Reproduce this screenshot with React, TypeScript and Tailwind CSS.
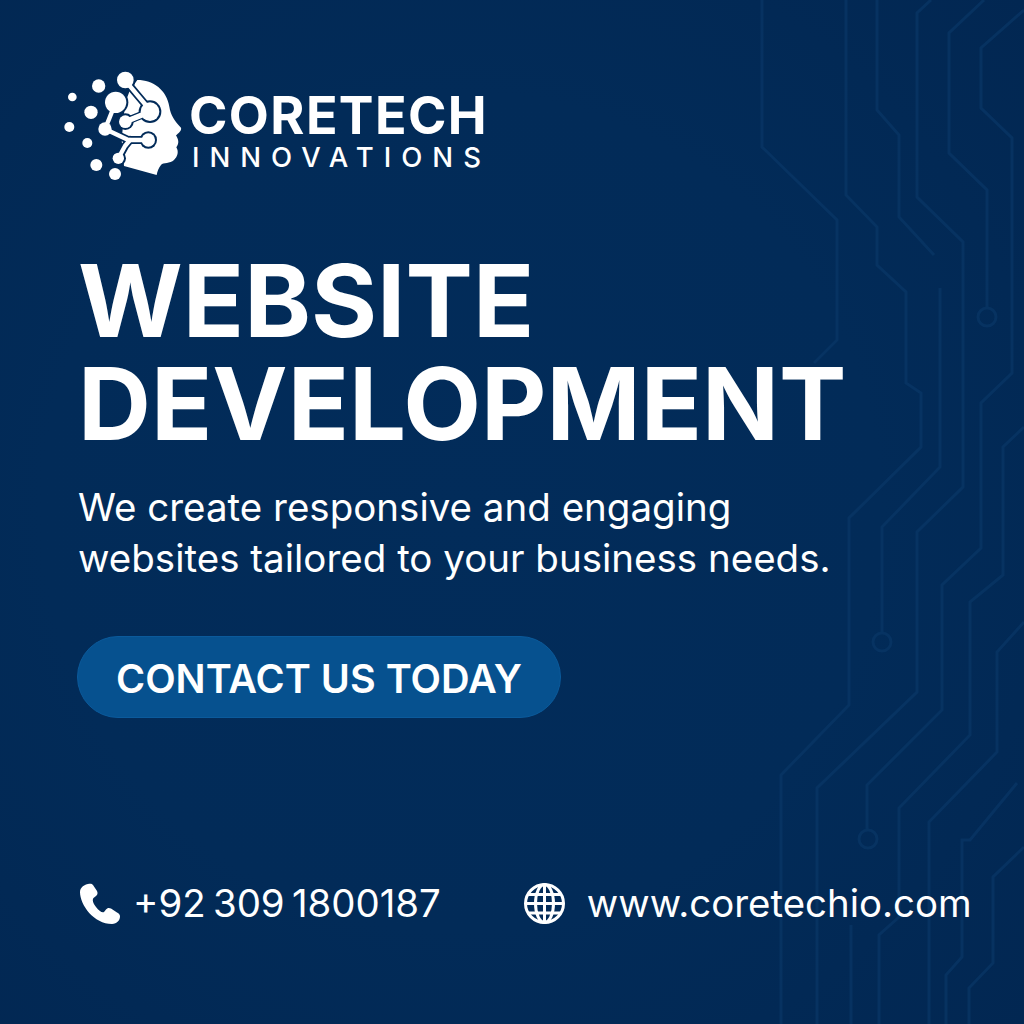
import React from "react";

const traces = [
  "M762 0V147L837 220V340L814 363",
  "M846 0V195L877 227V265L906 292V383L921 393V447L849 518V705L781 775V1024",
  "M877 0V110L899 135V217L934 255",
  "M931 0L917 13V197L963 242V487L917 532V692L817 788V1024",
  "M940 288V467L882 527V633",
  "M984 0L949 33V153L987 190V308",
  "M1024 10L981 48V108L1012 138V373L981 403V548L942 585V710L867 785V830",
  "M1024 427L1003 447V575L970 602V735L899 808V917L879 935V1024",
  "M1024 622L997 652V752L929 822V1024",
  "M1017 783L970 840H962V957L946 975V1024",
  "M1024 847L993 877V963L969 988V1024",
  "M851 925V1024",
];

function CircuitBackground() {
  return (
    <svg className="absolute inset-0 h-full w-full" viewBox="0 0 1024 1024" fill="none">
      <g stroke="#0a3868" strokeWidth="3" opacity="0.65">
        {traces.map((d) => (
          <path key={d} d={d} />
        ))}
        <circle cx="987" cy="317" r="9" />
        <circle cx="882" cy="642" r="9" />
        <circle cx="868" cy="839" r="9" />
      </g>
    </svg>
  );
}

// node links inside the head: each one gets a dark casing under a white core
const links = [
  "M226 62L262 105L300 150",
  "M197 127L178 175L165 207",
  "M226 185L300 155",
  "M165 207L235 240H295",
  "M205 295L225 258L240 240",
];
const nodes: [number, number, number][] = [
  [226, 60, 25],
  [197, 127, 32],
  [300, 155, 28],
  [226, 185, 19],
  [165, 207, 20],
  [295, 240, 20],
  [205, 295, 17],
];
const dots: [number, number, number][] = [
  [146, 78, 20],
  [67, 111, 13],
  [123, 157, 20],
  [58, 201, 15],
  [112, 249, 15],
  [139, 315, 18],
  [195, 342, 18],
];

function Logo() {
  return (
    <svg className="h-[130px] w-[150px] shrink-0" viewBox="0 0 450 390" fill="none">
      <path
        fill="#fff"
        d="M262 60C310 60 350 90 358 140C362 165 372 180 393 203C396 212 384 220 378 226C386 240 388 250 379 262C387 275 383 290 372 300C360 312 340 306 333 315C325 325 322 335 320 345L222 318L215 240L225 130L240 90Z"
      />
      <g strokeLinecap="round" strokeLinejoin="round">
        {links.map((d) => (
          <path key={d} d={d} stroke="#022b59" strokeWidth="24" />
        ))}
        {nodes.map(([cx, cy, r]) => (
          <circle key={cx + "-" + cy} cx={cx} cy={cy} r={r + 6} fill="#022b59" />
        ))}
        {links.map((d) => (
          <path key={d} d={d} stroke="#fff" strokeWidth="13" />
        ))}
        <path d="M226 185L300 155" stroke="#fff" strokeWidth="16" />
      </g>
      {nodes.concat(dots).map(([cx, cy, r]) => (
        <circle key={cx + "_" + cy} cx={cx} cy={cy} r={r} fill="#fff" />
      ))}
    </svg>
  );
}

function PhoneIcon() {
  return (
    <svg className="h-[41px] w-[40px] shrink-0" viewBox="0 0 40 41" fill="#fff">
      <path d="M8 1C5 1.5 0 4 0 9C0 22 14 41 32 41C37 41 40 37 40 33.5C40 31.5 39 30.5 37 29.500L31 25.500C29 24.500 27 25 26 26.500L24 29C22 30 19 28 16 24C13 20 12 17 13.500 15L16 13C17.500 12 18 10 17 8L13 2C12 .5 10 .5 8 1Z" />
    </svg>
  );
}

function GlobeIcon() {
  return (
    <svg className="h-[41px] w-[41px] shrink-0" viewBox="0 0 41 41" fill="none" stroke="#fff" strokeWidth="3">
      <circle cx="20.5" cy="20.5" r="19" />
      <ellipse cx="20.5" cy="20.5" rx="9" ry="19" />
      <path d="M20.5 1.500V39.500M2 20.500H39M4.500 11.500H36.500M4.500 30H36.500" />
    </svg>
  );
}

export default function App() {
  return (
    <div
      className="relative flex h-[1024px] w-[1024px] flex-col overflow-hidden bg-[radial-gradient(circle_at_45%_50%,#022c5a_0%,#022b58_55%,#022752_100%)] text-white"
      style={{ fontFamily: "Inter, 'Liberation Sans', sans-serif" }}
    >
      <CircuitBackground />
      <div className="relative flex flex-col pl-[78px]">
        <div className="-ml-[28px] mt-[60px] flex items-start">
          <Logo />
          <div className="-ml-[11px] mt-[31px] flex flex-col">
            <span className="text-[52px] leading-[50px] font-bold tracking-[1.4px]">CORETECH</span>
            <span className="ml-[3px] text-[27.5px] leading-[32px] font-medium tracking-[10px]">INNOVATIONS</span>
          </div>
        </div>
        <h1 className="mt-[59px] text-[101px] leading-[103px] font-bold">
          WEBSITE
          <br />
          DEVELOPMENT
        </h1>
        <p className="mt-[27px] text-[38.5px] leading-[51px]">
          We create responsive and engaging
          <br />
          websites tailored to your business needs.
        </p>
        <div className="mt-[52px] flex h-[82px] w-[484px] -ml-[1px] items-center justify-center rounded-full border border-[#0b5a9b] bg-[#06518f] pt-[5px] text-[39.6px] font-semibold">
          CONTACT US TODAY
        </div>
        <div className="mt-[157px] flex items-center text-[38.4px]">
          <div className="ml-[2px] flex items-center gap-[13px]">
            <PhoneIcon />
            <span className="[word-spacing:-3.5px]">+92 309 1800187</span>
          </div>
          <div className="ml-[83px] flex items-center gap-[22px]">
            <GlobeIcon />
            <span>www.coretechio.com</span>
          </div>
        </div>
      </div>
    </div>
  );
}
